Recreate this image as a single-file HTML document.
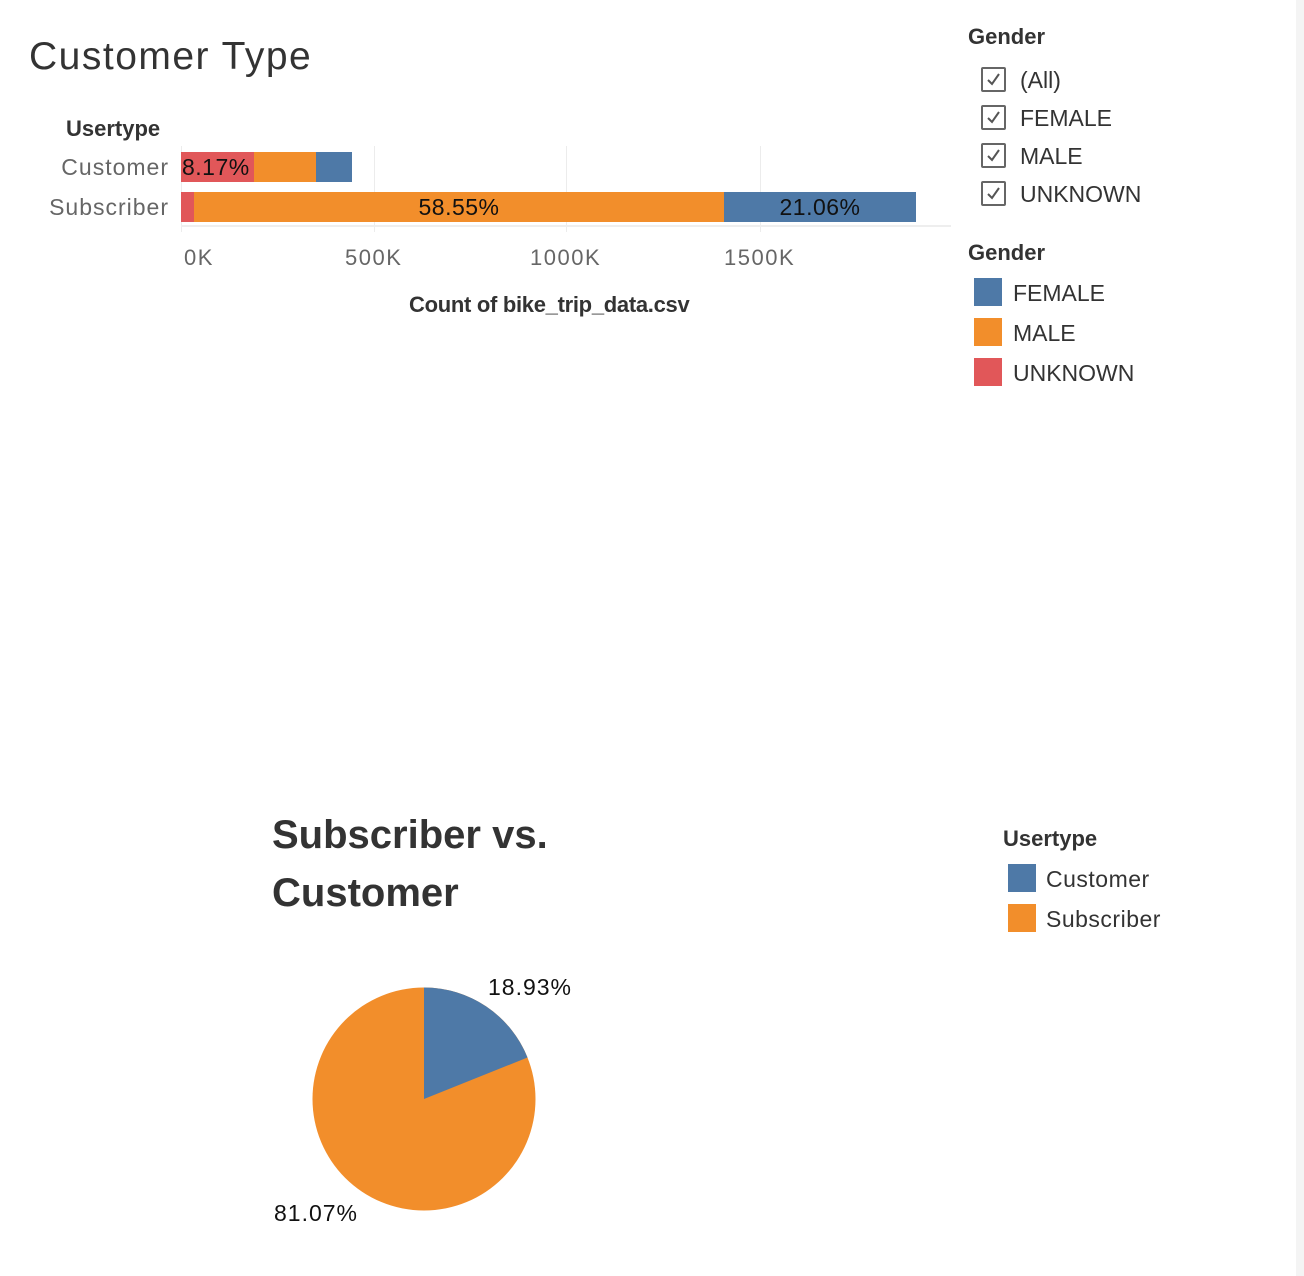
<!DOCTYPE html>
<html><head><meta charset="utf-8"><style>
body{margin:0;width:1304px;height:1276px;background:#fff;position:relative;overflow:hidden;font-family:"Liberation Sans",sans-serif;color:#333}
.a{position:absolute;white-space:nowrap}
.cb{position:absolute;width:25px;height:25px;border:2px solid #666;box-sizing:border-box;border-radius:2px}
.cb svg{position:absolute;left:3px;top:3px}
.sw{position:absolute;width:28px;height:28px}
.ax{font-size:22px;color:#666;letter-spacing:1.5px}
</style></head><body>
<div class="a" style="left:1296px;top:0;width:8px;height:1276px;background:#f4f4f4"></div>
<div class="a" style="left:29px;top:35px;font-size:39px;letter-spacing:1.5px;color:#333">Customer Type</div>
<div class="a" style="left:66px;top:116px;font-size:22px;font-weight:bold;color:#333">Usertype</div>
<div class="a" style="left:0;width:169px;text-align:right;top:154px;font-size:23px;letter-spacing:1px;color:#666">Customer</div>
<div class="a" style="left:0;width:169px;text-align:right;top:194px;font-size:23px;letter-spacing:1px;color:#666">Subscriber</div>
<div class="a" style="left:374px;top:146px;width:1px;height:86px;background:#ececec"></div>
<div class="a" style="left:566px;top:146px;width:1px;height:86px;background:#ececec"></div>
<div class="a" style="left:760px;top:146px;width:1px;height:86px;background:#ececec"></div>
<div class="a" style="left:181px;top:146px;width:1px;height:86px;background:#ececec"></div>
<div class="a" style="left:181px;top:225px;width:770px;height:2px;background:#eee"></div>
<div class="a" style="left:181px;top:152px;width:73px;height:30px;background:#e15759"></div>
<div class="a" style="left:254px;top:152px;width:62px;height:30px;background:#f28e2b"></div>
<div class="a" style="left:316px;top:152px;width:36px;height:30px;background:#4e79a7"></div>
<div class="a" style="left:182px;top:154px;font-size:23px;letter-spacing:0.5px;color:#111">8.17%</div>
<div class="a" style="left:181px;top:192px;width:13px;height:30px;background:#e15759"></div>
<div class="a" style="left:194px;top:192px;width:530px;height:30px;background:#f28e2b"></div>
<div class="a" style="left:724px;top:192px;width:192px;height:30px;background:#4e79a7"></div>
<div class="a" style="left:194px;width:530px;text-align:center;top:194px;font-size:23px;letter-spacing:0.5px;color:#111">58.55%</div>
<div class="a" style="left:724px;width:192px;text-align:center;top:194px;font-size:23px;letter-spacing:0.5px;color:#111">21.06%</div>
<div class="a ax" style="left:184px;top:245px">0K</div>
<div class="a ax" style="left:345px;top:245px">500K</div>
<div class="a ax" style="left:530px;top:245px">1000K</div>
<div class="a ax" style="left:724px;top:245px">1500K</div>
<div class="a" style="left:409px;top:292px;font-size:22px;font-weight:bold;letter-spacing:-0.3px;color:#333">Count of bike_trip_data.csv</div>

<div class="a" style="left:968px;top:24px;font-size:22px;font-weight:bold;color:#333">Gender</div>
<div class="cb" style="left:981px;top:67px"><svg width="15" height="15"><path d="M2 8 L6 12 L13 2" stroke="#555" stroke-width="2" fill="none"/></svg></div>
<div class="cb" style="left:981px;top:105px"><svg width="15" height="15"><path d="M2 8 L6 12 L13 2" stroke="#555" stroke-width="2" fill="none"/></svg></div>
<div class="cb" style="left:981px;top:143px"><svg width="15" height="15"><path d="M2 8 L6 12 L13 2" stroke="#555" stroke-width="2" fill="none"/></svg></div>
<div class="cb" style="left:981px;top:181px"><svg width="15" height="15"><path d="M2 8 L6 12 L13 2" stroke="#555" stroke-width="2" fill="none"/></svg></div>
<div class="a" style="left:1020px;top:67px;font-size:23px;color:#333">(All)</div>
<div class="a" style="left:1020px;top:105px;font-size:23px;color:#333">FEMALE</div>
<div class="a" style="left:1020px;top:143px;font-size:23px;color:#333">MALE</div>
<div class="a" style="left:1020px;top:181px;font-size:23px;color:#333">UNKNOWN</div>
<div class="a" style="left:968px;top:240px;font-size:22px;font-weight:bold;color:#333">Gender</div>
<div class="sw" style="left:974px;top:278px;background:#4e79a7"></div>
<div class="sw" style="left:974px;top:318px;background:#f28e2b"></div>
<div class="sw" style="left:974px;top:358px;background:#e15759"></div>
<div class="a" style="left:1013px;top:280px;font-size:23px;color:#333">FEMALE</div>
<div class="a" style="left:1013px;top:320px;font-size:23px;color:#333">MALE</div>
<div class="a" style="left:1013px;top:360px;font-size:23px;color:#333">UNKNOWN</div>

<div class="a" style="left:272px;top:806px;font-size:40px;line-height:58px;font-weight:bold;color:#333;white-space:normal;width:320px">Subscriber vs.<br>Customer</div>
<div class="a" style="left:1003px;top:826px;font-size:22px;font-weight:bold;color:#333">Usertype</div>
<div class="sw" style="left:1008px;top:864px;background:#4e79a7"></div>
<div class="sw" style="left:1008px;top:904px;background:#f28e2b"></div>
<div class="a" style="left:1046px;top:866px;font-size:23px;letter-spacing:0.5px;color:#333">Customer</div>
<div class="a" style="left:1046px;top:906px;font-size:23px;letter-spacing:0.5px;color:#333">Subscriber</div>
<svg class="a" style="left:0;top:0" width="1304" height="1276">
<circle cx="424" cy="1099" r="111.5" fill="#f28e2b"/>
<path d="M424 1099 L424 987.5 A111.5 111.5 0 0 1 527.5 1057.5 Z" fill="#4e79a7"/>
</svg>
<div class="a" style="left:488px;top:974px;font-size:23px;letter-spacing:1px;color:#111">18.93%</div>
<div class="a" style="left:274px;top:1200px;font-size:23px;letter-spacing:1px;color:#111">81.07%</div>
</body></html>
